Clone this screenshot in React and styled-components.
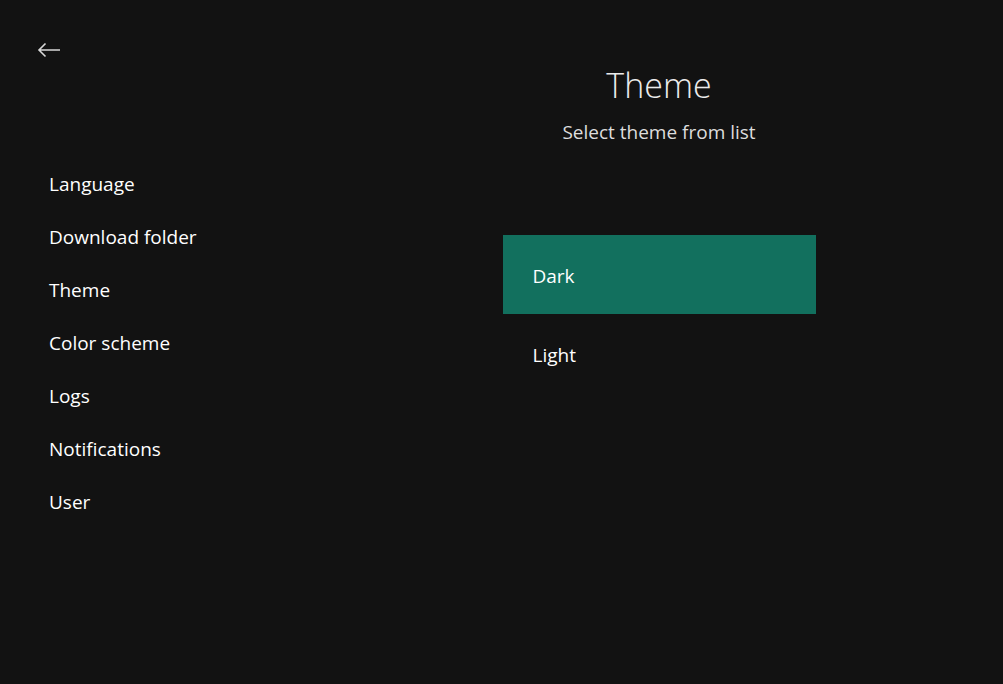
import React, { useState } from "react";
import styled, { createGlobalStyle } from "styled-components";

const GlobalStyle = createGlobalStyle`
  html, body {
    margin: 0;
    padding: 0;
    background: #121212;
  }
  body {
    font-family: "Open Sans", "Noto Sans", sans-serif;
    color: #ffffff;
  }
`;

const Page = styled.div`
  display: flex;
  width: 100%;
  height: 684px;
  background: #121212;
`;

const Sidebar = styled.div`
  width: 315px;
  display: flex;
  flex-direction: column;
`;

const BackButton = styled.button`
  display: flex;
  align-items: center;
  justify-content: center;
  width: 40px;
  height: 40px;
  margin: 30px 0 0 29px;
  padding: 0;
  border: none;
  background: transparent;
  color: #d8d8d8;
  cursor: pointer;
`;

const Nav = styled.nav`
  display: flex;
  flex-direction: column;
  margin-top: 87px;
`;

const NavItem = styled.div`
  height: 53px;
  display: flex;
  align-items: center;
  padding-left: 49px;
  font-size: 19px;
  color: #ffffff;
  cursor: pointer;
`;

const Main = styled.div`
  flex: 1;
  display: flex;
  flex-direction: column;
  align-items: center;
  padding-top: 62px;
`;

const Title = styled.h1`
  margin: 0;
  font-size: 34px;
  font-weight: 300;
  line-height: 46px;
  color: #ebebeb;
`;

const Subtitle = styled.p`
  margin: 11px 0 0;
  font-size: 19px;
  line-height: 26px;
  color: #dddddd;
`;

const List = styled.div`
  width: 313px;
  margin-top: 90px;
  display: flex;
  flex-direction: column;
`;

const Option = styled.div`
  height: 79px;
  display: flex;
  align-items: center;
  padding: 2px 0 0 30px;
  box-sizing: border-box;
  font-size: 19px;
  color: #ffffff;
  background: ${(p) => (p.$active ? "#12705e" : "transparent")};
  cursor: pointer;
`;

const navItems = [
  "Language",
  "Download folder",
  "Theme",
  "Color scheme",
  "Logs",
  "Notifications",
  "User",
];

export default function App() {
  const [theme, setTheme] = useState("Dark");
  return (
    <>
      <GlobalStyle />
      <Page>
        <Sidebar>
          <BackButton aria-label="Back">
            <svg width="24" height="16" viewBox="0 0 24 16" fill="none">
              <path
                d="M23 8H2M8.5 1.5L2 8l6.5 6.5"
                stroke="currentColor"
                strokeWidth="1.6"
              />
            </svg>
          </BackButton>
          <Nav>
            {navItems.map((item) => (
              <NavItem key={item}>{item}</NavItem>
            ))}
          </Nav>
        </Sidebar>
        <Main>
          <Title>Theme</Title>
          <Subtitle>Select theme from list</Subtitle>
          <List>
            {["Dark", "Light"].map((t) => (
              <Option key={t} $active={theme === t} onClick={() => setTheme(t)}>
                {t}
              </Option>
            ))}
          </List>
        </Main>
      </Page>
    </>
  );
}
